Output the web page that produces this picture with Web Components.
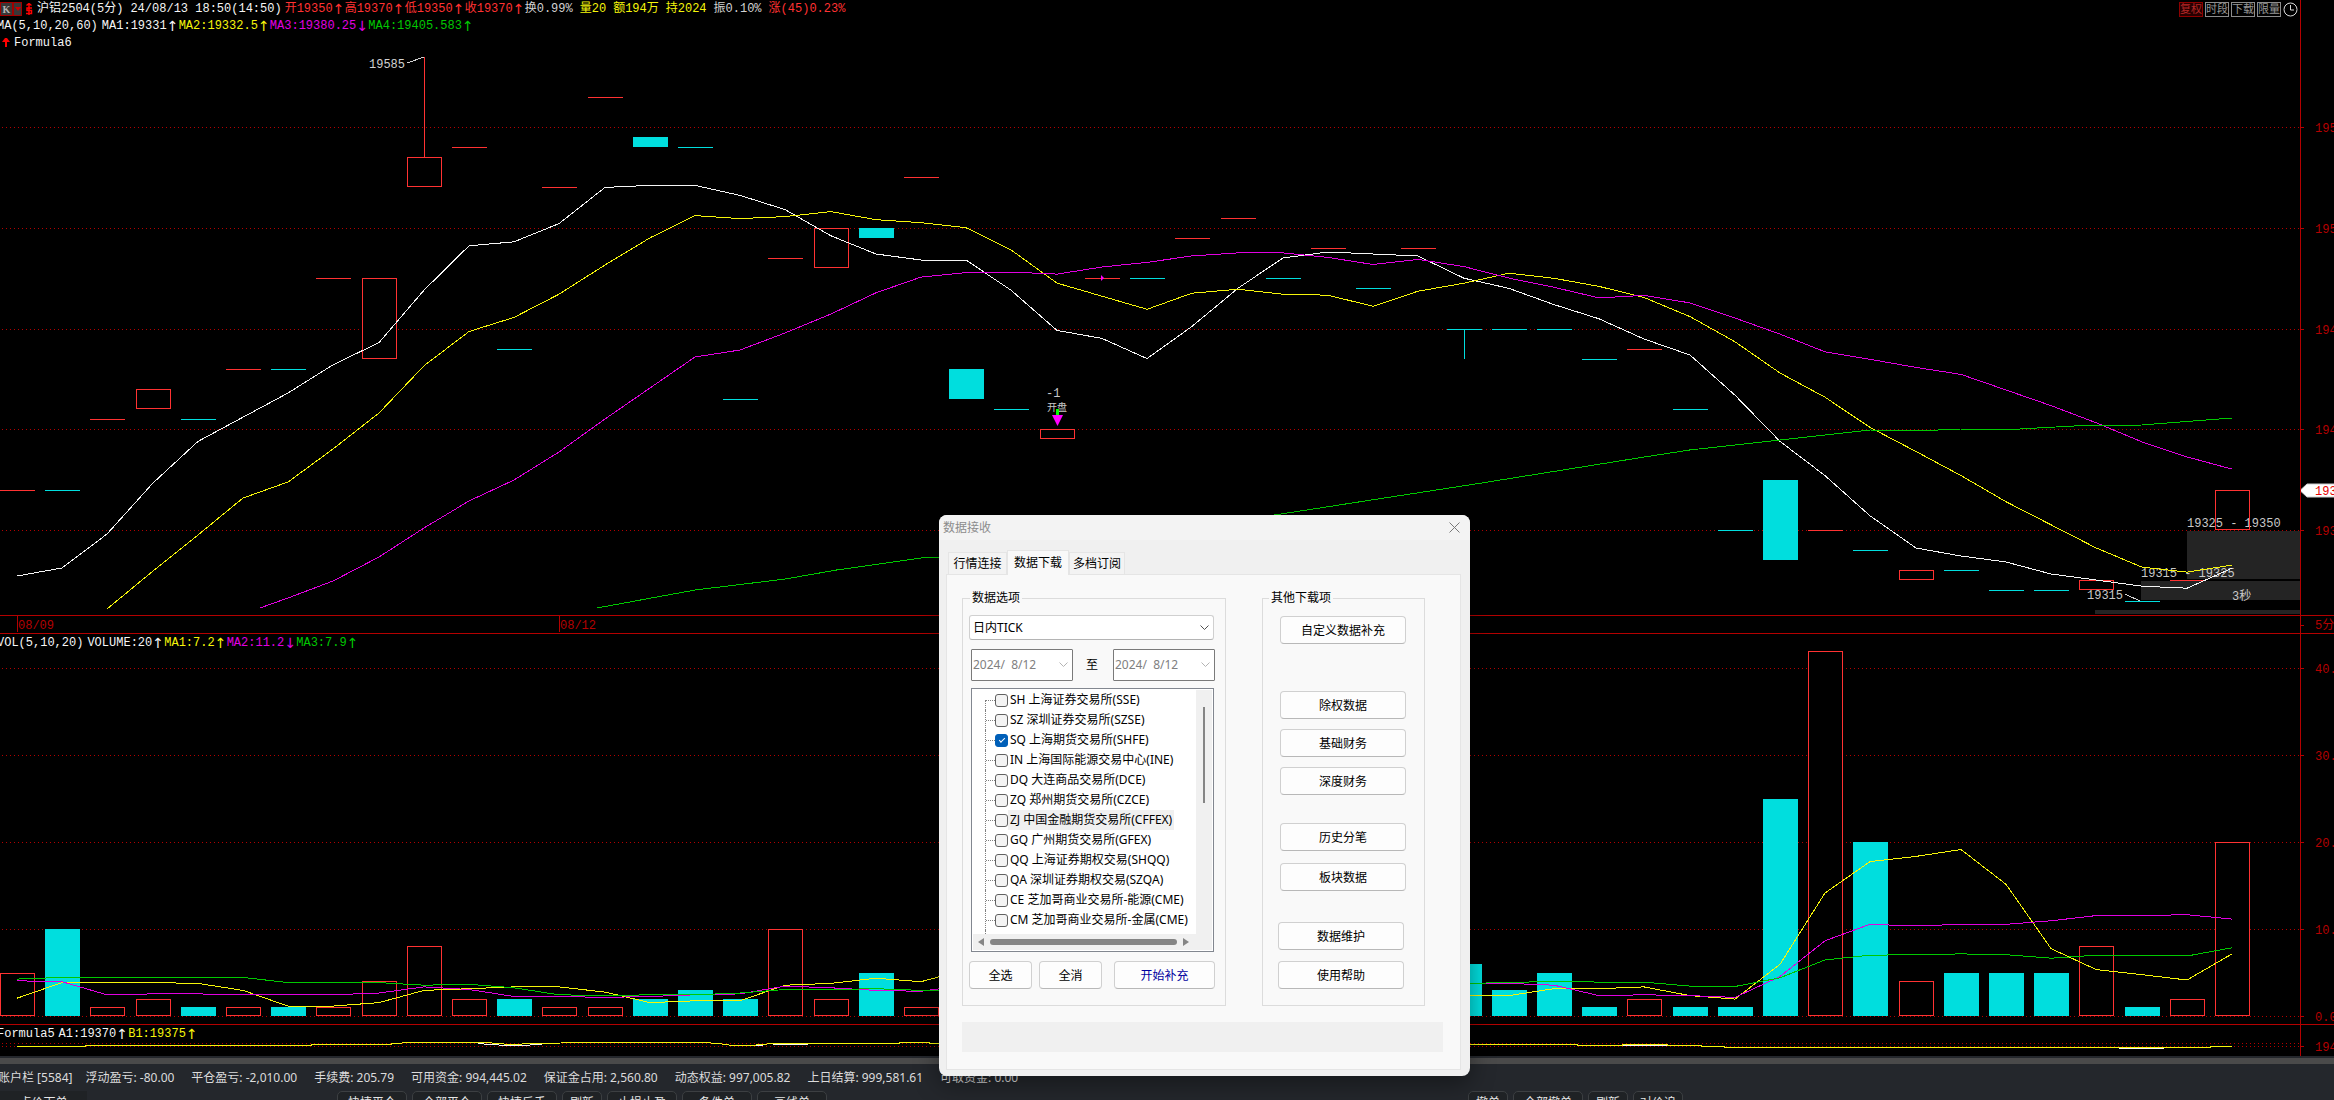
<!DOCTYPE html>
<html lang="zh-CN">
<head>
<meta charset="utf-8">
<title>沪铝2504</title>
<style>
html,body{margin:0;height:100%;background:#000;overflow:hidden}
</style>
</head>
<body>
<trade-app></trade-app>
<script>
const MONO = '"Liberation Mono","Noto Sans CJK SC",monospace';
const UI = '"Noto Sans","Noto Sans CJK SC",sans-serif';
const C = {red:'#ff3232',cyan:'#00dede',yellow:'#f5f50a',mag:'#e100e1',green:'#00c800',frame:'#b40000',white:'#f5f5f5'};

/* One entry per bar: [kind, body top, body bottom, wick end], measured down the price pane */
const bars = [
 ['r',490],['c',490],['r',419],['r',389,408],['c',419],['r',369],['c',369],['r',278],['r',278,358],['r',157,186,57],
 ['r',147],['c',349],['r',187],['r',97],['c',137,147],['c',147],['c',399],['r',258],['r',228,267],['c',228,238],
 ['r',177],['c',369,399],['c',409],['r',429,438],['r',278],['c',278],['r',238],['r',218],['c',278],['r',248],
 ['c',288],['r',248],['c',329,329,359],['c',329],['c',329],['c',359],['r',349],['c',409],['c',530],['c',480,560],
 ['r',530],['c',550],['r',570,579],['c',570],['c',590],['c',590],['r',580,589],['c',601],['r',580],['r',490,529]];
const vols = [5,10,1,2,1,1,1,1,4,8,2,2,1,1,2,3,2,10,2,5,1,9,3,3,7,13,1,2,3,1,1,1,6,3,5,1,2,1,1,25,42,20,4,5,5,5,8,1,2,20];
const close = bars.map(b => b[0] === 'c' && b[2] ? b[2] : b[1]);
const mean = (a, n) => a.map((_, i) => i < n - 1 ? null : a.slice(i - n + 1, i + 1).reduce((s, v) => s + v, 0) / n);
const seed = (m, from, vals) => { vals.forEach((v, k) => m[from + k] = v); return m; };
const N = bars.length;
const svgText = (x, y, t, fill, extra = '') => `<text x="${x}" y="${y}" fill="${fill}" ${extra}>${t}</text>`;

/* Base class: draws again whenever its box changes size */
class Drawn extends HTMLElement {
  constructor() {
    super();
    this.attachShadow({mode: 'open'}).innerHTML = `<style>
      :host{display:block;overflow:hidden;min-width:0;min-height:0;position:relative}
      svg{display:block;width:100%;height:100%;font:12px ${MONO};white-space:pre}
      polyline,line,rect{shape-rendering:crispEdges}
    </style><svg></svg>`;
    this.svg = this.shadowRoot.querySelector('svg');
  }
  connectedCallback() { this.redraw(); new ResizeObserver(() => this.redraw()).observe(this); }
  redraw() {
    this.w = this.clientWidth; this.h = this.clientHeight;
    if (this.w) this.svg.innerHTML = this.draw();
  }
  x(i) { return Math.round(17 + i * (this.w - 85) / (N - 1)); }
  get bw() { return Math.round((this.w - 85) / (N - 1) * .78); }
  line(vals, f, color) {
    let pts = '';
    vals.forEach((v, i) => { if (v != null) pts += `${this.x(i)},${f(v).toFixed(1)} `; });
    return `<polyline points="${pts}" fill="none" stroke="${color}"/>`;
  }
  grid(y) { return `<line x1="2" x2="${this.w}" y1="${y}" y2="${y}" stroke="#b40000" stroke-dasharray="1 3"/>`; }
}

class PricePlot extends Drawn {
  draw() {
    const k = this.h / 565, f = v => (v - 50) * k, w = this.w, b = this.bw;
    let s = '';
    for (const [x, y, hh] of [[113, 531, 48], [159, 581, 19], [205, 610, 4]])
      s += `<rect x="${w - x}" y="${f(y)}" width="${x}" height="${hh}" fill="#242424"/>`;
    for (const y of [127.5, 228.5, 329.5, 429.5, 530.5]) s += this.grid(f(y));
    s += svgText(this.x(49) - 45, f(527), '19325 - 19350', '#c8c8c8');
    s += svgText(this.x(48) - 46, f(577), '19315 - 19325', '#c8c8c8');
    s += svgText(this.x(47) - 55, f(599), '19315', '#c8c8c8');
    s += svgText(w - 68, f(600), '3秒', '#c8c8c8');
    s += svgText(this.x(9) - 55, f(68), '19585', '#d2d2d2');
    s += `<line x1="${this.x(9) - 17}" y1="${f(63)}" x2="${this.x(9)}" y2="${f(57)}" stroke="#d2d2d2"/>`;
    s += `<line x1="${this.x(47) - 17}" y1="${f(594)}" x2="${this.x(47)}" y2="${f(602)}" stroke="#d2d2d2"/>`;
    bars.forEach(([t, y1, y2, wick], i) => {
      const x = this.x(i), c = t === 'r' ? C.red : C.cyan;
      if (!y2 || y1 === y2) s += `<line x1="${x - b / 2}" x2="${x + b / 2}" y1="${f(y1) + .5}" y2="${f(y1) + .5}" stroke="${c}"/>`;
      else if (t === 'c') s += `<rect x="${x - b / 2}" y="${f(y1)}" width="${b}" height="${f(y2) - f(y1)}" fill="${c}"/>`;
      else s += `<rect x="${x - 17 + .5}" y="${f(y1) + .5}" width="${b - 1}" height="${f(y2) - f(y1)}" fill="${i === 49 ? 'none' : '#000'}" stroke="${c}"/>`;
      if (wick) s += `<line x1="${x + .5}" x2="${x + .5}" y1="${f(y1)}" y2="${f(wick)}" stroke="${c}"/>`;
    });
    s += `<path d="M${this.x(24) - 1} ${f(275)}v6l3-3z" fill="#ff00ff"/>`;
    s += this.line(seed(mean(close, 5), 0, [576, 568, 534, 483]), f, C.white);
    s += this.line(seed(mean(close, 10), 2, [609, 571, 535, 498, 482, 449, 413]), f, C.yellow);
    s += this.line(seed(mean(close, 20), 6, [598, 581, 557, 528, 501, 480, 452, 419, 388, 357, 350, 333, 314]), f, C.mag);
    s += `<polyline points="${this.x(5) + 17},${f(608)} ${this.x(6)},${f(598)}" stroke="${C.mag}"/>`;
    const g = [[12.83,608],[15,590],[17,579],[18.13,570],[20,558],[20.4,557],[27.4,518],[28.1,513],[32.4,483],[36,457],[37,450],[39,440],[41,430],[42,431],[43,429],[44.3,429],[45.5,426],[47,425],[49,418]];
    const gx = i => 17 + i * (w - 85) / (N - 1);
    s += `<polyline points="${g.map(([i, y]) => gx(i) + ',' + f(y)).join(' ')}" fill="none" stroke="${C.green}"/>`;
    const m = this.x(23);
    s += svgText(m - 11, f(397), '-1', '#c8c8c8') + svgText(m - 10, f(411), '开盘', '#c8c8c8', 'font-size="10"');
    s += `<rect x="${m - 1}" y="${f(409)}" width="3" height="7" fill="#00ff00"/><path d="M${m - 5} ${f(415)}h11l-5.5 11z" fill="#ff00ff"/>`;
    return s;
  }
}
class VolumePlot extends Drawn {
  draw() {
    const k = this.h / 374, f = v => (366.5 - v * 8.7) * k, b = this.bw;
    let s = [0, 10, 20, 30, 40].map(v => this.grid(Math.floor(f(v)) + .5)).join('');
    vols.forEach((v, i) => {
      const x = this.x(i), y = Math.floor(f(v));
      s += bars[i][0] === 'c'
        ? `<rect x="${x - b / 2}" y="${y}" width="${b}" height="${Math.floor(f(0)) - y}" fill="${C.cyan}"/>`
        : `<rect x="${x - 17 + .5}" y="${y + .5}" width="${b - 1}" height="${Math.floor(f(0)) - y - 1}" fill="#000" stroke="${C.red}"/>`;
    });
    s += this.line(seed(mean(vols, 5), 0, [2.1, 3.9, 3.9, 3.9]), f, C.yellow);
    s += this.line(seed(mean(vols, 10), 0, [4.1, 4, 2.5, 2.6, 2.6, 2.5, 2.5, 2.5, 2.7]), f, C.mag);
    s += this.line(seed(mean(vols, 20), 0, [4.3,4.5,4.5,4.5,4.5,4.5,3.9,3.9,3.9,3.6,3.7,3.3,2.5,2.4,2.5,2.5,2.7,3.1,3.1]), f, C.green);
    return s;
  }
}
class FormulaPlot extends Drawn {
  draw() {
    const r = this.w / 2300, st = (a, c) => `<polyline points="${a.map(([x, y]) => x * r + ',' + (y - 1041)).join(' ')}" fill="none" stroke="${c}"/>`;
    return this.grid(2.5) + this.grid(5.5)
      + st([[478,1043.5],[490,1044.5],[508,1045.5],[526,1045.5],[534,1044.5],[550,1043.5]], C.white)
      + st([[745,1045.5],[763,1045.5]], C.white) + st([[773,1044.5],[808,1044.5]], C.white)
      + st([[1622,1045.5],[1667,1045.5]], C.white) + st([[2119,1048.5],[2164,1048.5]], C.white)
      + st([[17,1046.5],[85,1046.5],[85,1045.5],[311,1045.5],[311,1044.5],[391,1044.5],[391,1043.5],[413,1042.5],[480,1042.5],[503,1043.5],[505,1044.5],[540,1043.5],[582,1042.5],[703,1042.5],[718,1043.5],[733,1045.5],[750,1045.5],[773,1043.5],[899,1043.5],[899,1042.5],[929,1042.5],[929,1043.5],[970,1044.5],[1577,1044.5],[1577,1045.5],[1622,1045.5],[1622,1044.5],[1667,1044.5],[1667,1045.5],[1701,1045.5],[1701,1046.5],[1724,1046.5],[1724,1047.5],[2210,1047.5],[2210,1046.5],[2232,1046.5]], C.yellow);
  }
}
class DatePlot extends Drawn {
  draw() {
    return [[0, '08/09'], [12, '08/12']].map(([i, t]) =>
      `<line x1="${this.x(i) + .5}" x2="${this.x(i) + .5}" y1="0" y2="16" stroke="${C.frame}"/>` + svgText(this.x(i) + 1, 13, t, C.frame)).join('');
  }
}
class AxisScale extends Drawn {
  draw() {
    const labels = JSON.parse(this.getAttribute('labels')), k = this.h / +this.getAttribute('base');
    const mark = this.getAttribute('mark');
    let s = labels.map(([y, t]) => `<line x1="0" x2="3" y1="${y * k}" y2="${y * k}" stroke="${C.frame}"/>` + svgText(14, y * k + 4, t, C.frame)).join('');
    if (mark) {
      const [y, t] = JSON.parse(mark);
      s += `<path d="M-1 ${y * k}L6 ${y * k - 6.5}H40V${y * k + 6.5}H6Z" fill="#fff" stroke="#ccc"/>` + svgText(14, y * k + 4, t, '#e60000');
    }
    return s;
  }
}

/* One pane: header row above a plot, with the price axis down the right side */
class ChartPane extends HTMLElement {
  constructor() {
    super();
    this.attachShadow({mode: 'open'}).innerHTML = `<style>
      :host{display:grid;grid-template-columns:minmax(0,1fr) 34px;grid-template-rows:auto minmax(0,1fr);background:#000;box-sizing:border-box;min-height:0}
      .axis{grid-column:2;grid-row:1/3;border-left:1px solid ${C.frame};min-height:0}
      .axis ::slotted(*){height:100%}
      .head{min-width:0;overflow:hidden}
      .plot{display:grid;min-height:0;min-width:0;grid-row:2}
    </style><div class="head"><slot name="head"></slot></div><div class="plot"><slot></slot></div><div class="axis"><slot name="axis"></slot></div>`;
  }
}

/* A line of indicator readings; trend arrows have a fixed cell */
class ReadingLine extends HTMLElement {
  constructor() {
    super();
    this.attachShadow({mode: 'open'}).innerHTML = `<style>
      :host{display:flex;align-items:center;height:16px;font:12px/16px ${MONO};white-space:pre;color:${C.white}}
      i{font:14px/16px "DejaVu Sans",sans-serif;display:inline-block;width:12px;height:16px;vertical-align:top;text-align:center}
      span{flex:none;height:16px}
      .r{color:${C.red}}.y{color:${C.yellow}}.m{color:${C.mag}}.g{color:${C.green}}.s{color:#d2d2d2}
      .gap{margin-left:7px}.near{margin-left:4px}.date{margin-right:3px}
    </style>` + this.getAttribute('items').split('|').map(t => {
      const [cls, txt] = t.split('~');
      return `<span class="${cls}">${txt.replace(/[↑↓]/g, '<i>$&</i>')}</span>`;
    }).join('');
  }
}

class ChartTools extends HTMLElement {
  constructor() {
    super();
    this.attachShadow({mode: 'open'}).innerHTML = `<style>
      :host{display:flex;gap:2px;align-items:center;margin-left:auto;padding-right:2px}
      button{all:unset;box-sizing:border-box;width:24px;height:15px;border:1px solid #8c8c8c;font:11px/12px ${UI};color:#969696;text-align:center}
      .on{border-color:#8c0000;color:#b42828;background:#280000}
      svg{width:15px;height:15px;display:block}
    </style><button class="on">复权</button><button>时段</button><button>下载</button><button>限量</button>
    <svg viewBox="0 0 15 15" fill="none" stroke="#dcdcdc"><circle cx="7.5" cy="7.5" r="6.5"/><path d="M7.5 3v5H11"/></svg>`;
  }
}
class SymbolIcons extends HTMLElement {
  constructor() {
    super();
    this.attachShadow({mode: 'open'}).innerHTML = `<style>
      :host{display:flex;flex:none;align-items:center;width:37px}
      button{all:unset;box-sizing:border-box;height:14px;border:1px solid #a00000;background:#373737;color:#b4b4b4;font:bold 10px/11px "Liberation Serif",serif;text-align:center;width:13px}
      .d{width:9px;display:grid;place-items:center}
      svg{display:block}
      .u{margin-left:3px}
    </style><button>K</button><button class="d" aria-label="周期"><svg width="6" height="4"><path d="M0 0h6L3 4z" fill="#c80000"/></svg></button>
    <svg class="u" width="8" height="13" viewBox="0 0 8 13" fill="none" stroke="#f00" stroke-width="1.5"><path d="M1.500 2.500L4 .5L6.500 2.500M7 5H2v2.500h4.500V10.500H1M4 1v11"/></svg>`;
  }
}
class UpFlag extends HTMLElement {
  constructor() {
    super();
    this.attachShadow({mode: 'open'}).innerHTML = `<style>:host{display:block;flex:none;width:14px}svg{display:block;margin-left:2px}</style>
    <svg width="8" height="9"><path d="M0 4l3-4h2l3 4H5v5H3V4z" fill="#f00"/></svg>`;
  }
}

class AccountBar extends HTMLElement {
  constructor() {
    super();
    const it = ['账户栏 [5584]','浮动盈亏: -80.00','平仓盈亏: -2,010.00','手续费: 205.79','可用资金: 994,445.02','保证金占用: 2,560.80','动态权益: 997,005.82','上日结算: 999,581.61','可取资金: 0.00'];
    this.attachShadow({mode: 'open'}).innerHTML = `<style>
      :host{display:flex;gap:17px;height:27px;align-items:center;font:12px/20px ${UI};color:#dcdcdc;white-space:pre;background:#24272c;border-top:6px solid #4a4a4a}
      span:first-of-type{margin:0 -4px 0 -2px}
    </style>` + it.map(t => `<span>${t}</span>`).join('');
  }
}
class OrderBar extends HTMLElement {
  constructor() {
    super();
    this.attachShadow({mode: 'open'}).innerHTML = `<style>
      :host{display:flex;gap:5px;height:9px;overflow:hidden;background:#24272c;align-items:flex-start;font:12px/20px ${UI}}
      button{all:unset;flex:none;box-sizing:border-box;width:70px;height:24px;border:1px solid #3c3f42;border-radius:5px;background:#1f2225;color:#e6e6e6;text-align:center}
      .n{width:40px}.m{width:50px}
      .tab{width:87px;border:0;border-radius:0;margin-right:245px;background:#1f2225}
      .sp{margin-left:636px}
    </style><button class="tab">点价下单</button><button>快捷平仓</button><button>全部平仓</button><button>快捷反手</button><button class="n">刷新</button><button>止损止盈</button><button>条件单</button><button>画线单</button>
    <button class="n sp">撤单</button><button>全部撤单</button><button class="n">刷新</button><button class="m">对价追</button>`;
  }
}

/* ---- dialog parts ---- */
class PushButton extends HTMLElement {
  constructor() {
    super();
    this.attachShadow({mode: 'open'}).innerHTML = `<style>
      :host{display:block;height:28px}
      button{all:unset;box-sizing:border-box;width:100%;height:100%;border:1px solid #d0d0d0;border-bottom-color:#b8b8b8;border-radius:4px;background:#fdfdfd;text-align:center;line-height:25px}
    </style><button><slot></slot></button>`;
  }
}
class DateBox extends HTMLElement {
  constructor() {
    super();
    this.attachShadow({mode: 'open'}).innerHTML = `<style>
      :host{display:flex;box-sizing:border-box;width:102px;height:32px;border:1px solid #7a7a7a;background:#fff;align-items:center;border-radius:1px}
      input{all:unset;flex:1;min-width:0;padding-left:1px;color:#808080;white-space:pre;font:12px/16px ${UI}}
      svg{margin-right:4px}
    </style><input aria-label="${this.getAttribute('label')}" value="2024/  8/12" readonly><svg width="9" height="6" fill="none" stroke="#b4b4b4"><path d="M.5 .5l4 4 4-4"/></svg>`;
  }
}
class ComboBox extends HTMLElement {
  constructor() {
    super();
    this.attachShadow({mode: 'open'}).innerHTML = `<style>
      :host{display:grid;width:245px;height:25px;align-items:center}
      select{grid-area:1/1;appearance:none;box-sizing:border-box;width:100%;height:100%;border:1px solid #d0d0d0;border-bottom-color:#b4b4b4;border-radius:3px;background:#fff;padding:0 3px;font:12px/16px ${UI};color:#000}
      svg{grid-area:1/1;justify-self:end;margin-right:5px;pointer-events:none}
    </style><select aria-label="数据类型"><option>日内TICK</option></select><svg width="9" height="6" fill="none" stroke="#505050"><path d="M.5 .5l4 4 4-4"/></svg>`;
  }
}
class ExchangeTree extends HTMLElement {
  constructor() {
    super();
    const rows = ['SH 上海证券交易所(SSE)','SZ 深圳证券交易所(SZSE)','SQ 上海期货交易所(SHFE)','IN 上海国际能源交易中心(INE)','DQ 大连商品交易所(DCE)','ZQ 郑州期货交易所(CZCE)','ZJ 中国金融期货交易所(CFFEX)','GQ 广州期货交易所(GFEX)','QQ 上海证券期权交易(SHQQ)','QA 深圳证券期权交易(SZQA)','CE 芝加哥商业交易所-能源(CME)','CM 芝加哥商业交易所-金属(CME)'];
    this.attachShadow({mode: 'open'}).innerHTML = `<style>
      :host{display:grid;grid-template-columns:minmax(0,1fr) 16px;grid-template-rows:1fr 16px;box-sizing:border-box;border:1px solid #828790;background:#fff;padding:1px}
      ul{list-style:none;margin:0;padding:0 0 0 12px;overflow:hidden}
      li{display:flex;align-items:center;height:20px;white-space:pre}
      li::before{content:"";order:-2;height:20px;border-left:1px dotted #808080}
      li:first-child::before{height:10px;align-self:flex-end}
      li::after{content:"";order:-1;width:9px;border-top:1px dotted #808080}
      ul::after{content:"";display:block;height:4px;border-left:1px dotted #808080}
      input{appearance:none;margin:0;box-sizing:border-box;flex:none;width:13px;height:13px;border:1px solid #606060;border-radius:3px;background:#f3f3f3;display:grid;place-items:center}
      input:checked{background:#005fb8;border-color:#005fb8}
      input:checked::after{content:"";width:5px;height:2px;border:solid #fff;border-width:0 0 1px 1px;transform:translateY(-1px) rotate(-45deg)}
      label{line-height:20px;padding:0 2px}
      .cur{background:#f0f0f0}
      .v{background:#f0f0f0;display:flex;justify-content:center}
      .v::before{content:"";width:2px;height:96px;margin-top:17px;background:#858585}
      .h{grid-column:1/3;background:#f0f0f0;display:flex;align-items:center;gap:6px;padding-left:5px}
      .h b{width:187px;height:6px;border-radius:3px;background:#858585}
    </style><ul>${rows.map((t, i) => `<li><input type="checkbox" id="e${i}" ${i === 2 ? 'checked' : ''}><label for="e${i}" class="${i === 6 ? 'cur' : ''}">${t}</label></li>`).join('')}</ul>
    <div class="v"></div><div class="h"><svg width="6" height="8"><path d="M6 0v8L0 4z" fill="#858585"/></svg><b></b><svg width="6" height="8"><path d="M0 0v8l6-4z" fill="#858585"/></svg></div>`;
  }
}
class DataDialog extends HTMLElement {
  constructor() {
    super();
    this.attachShadow({mode: 'open'}).innerHTML = `<style>
      :host{display:flex;flex-direction:column;width:531px;background:#f0f0f0;border-radius:8px;overflow:hidden;font:12px/16px ${UI};color:#000;box-shadow:0 8px 24px rgba(0,0,0,.4)}
      header{display:flex;justify-content:space-between;align-items:center;height:25px;background:#f3f3f3;color:#8c8c8c;padding:0 10px 0 4px}
      header button{all:unset;display:block}
      header svg{display:block}
      nav{display:flex;align-items:flex-end;height:34px;padding-left:9px}
      nav button{all:unset;box-sizing:border-box;height:22px;line-height:19px;text-align:center;border:1px solid #e5e5e5;border-bottom:0;background:#f3f3f3;width:59px}
      nav .on{background:#f9f9f9;height:25px;line-height:20px;width:62px;margin-bottom:-1px;z-index:1}
      nav .last{width:56px}
      main{margin:0 9px 6px 7px;border:1px solid #e5e5e5;background:#f9f9f9;padding:15px 17px 17px 15px}
      .row{display:flex;gap:36px}
      fieldset{margin:0;border:1px solid #dcdcdc;box-sizing:border-box;height:416px;min-width:0;display:flex;flex-direction:column}
      legend{padding:0 2px;height:16px}
      .a{width:264px;padding:9px 9px 0 6px}.a legend{margin-left:1px}
      .b{width:163px;padding:10px 0 0 17px}.b legend{margin-left:-11px}
      .dates{display:flex;align-items:center;margin:9px 0 7px 2px;width:244px}
      .dates span{width:40px;padding-right:2px;box-sizing:border-box;text-align:center}
      exchange-tree{width:243px;height:264px;margin-left:2px}
      .acts{display:flex;margin-top:9px}
      .acts push-button{width:63px;margin-right:7px}
      .acts .go{width:101px;margin:0 0 0 5px;color:#0000a0}
      .b push-button{width:126px;margin-bottom:10px}
      .b .g1{margin-bottom:47px}.b .g2{margin-bottom:28px}.b .g3{margin-bottom:12px}.b .g4{margin-bottom:31px}
      .b .help{width:126px;margin-left:-2px;margin-bottom:11px}
      .bar{height:30px;background:#f0f0f0;margin-top:16px}
    </style>
    <header><span>数据接收</span><button aria-label="关闭"><svg width="11" height="11" stroke="#787878"><path d="M.5 .5l10 10M10.5 .5l-10 10"/></svg></button></header>
    <nav><button>行情连接</button><button class="on">数据下载</button><button class="last">多档订阅</button></nav>
    <main><div class="row">
      <fieldset class="a"><legend>数据选项</legend><combo-box></combo-box>
        <div class="dates"><date-box label="开始日期"></date-box><span>至</span><date-box label="结束日期"></date-box></div>
        <exchange-tree></exchange-tree>
        <div class="acts"><push-button>全选</push-button><push-button>全消</push-button><push-button class="go">开始补充</push-button></div>
      </fieldset>
      <fieldset class="b"><legend>其他下载项</legend>
        <push-button class="g1">自定义数据补充</push-button><push-button>除权数据</push-button><push-button>基础财务</push-button><push-button class="g2">深度财务</push-button>
        <push-button class="g3">历史分笔</push-button><push-button class="g4">板块数据</push-button><push-button class="help">数据维护</push-button><push-button class="help">使用帮助</push-button>
      </fieldset></div><div class="bar"></div></main>`;
  }
}

class TradeApp extends HTMLElement {
  constructor() {
    super();
    this.attachShadow({mode: 'open'}).innerHTML = `<style>
      :host{display:flex;flex-direction:column;height:100vh;position:relative;overflow:hidden;background:#000}
      .price{flex:615 1 0}.vol{flex:390 1 0;border-top:1px solid ${C.frame}}
      .dates{flex:0 0 18px;border-top:1px solid ${C.frame}}
      .fx{flex:0 0 32px;border-top:1px solid ${C.frame}}
      .top{height:50px;padding-top:1px;box-sizing:border-box}
      .line{display:flex;align-items:center;height:16px}
      .top .line + .line{height:17px}
      .cut{margin-left:-3px}
      .vh{height:16px;padding-top:2px;box-sizing:border-box;display:flex;align-items:center}
      .split{flex:0 0 2px;background:#24272c}
      data-dialog{position:absolute;left:939px;top:515px}
    </style>
    <chart-pane class="price">
      <div slot="head" class="top">
        <div class="line"><symbol-icons></symbol-icons><reading-line items="w~沪铝2504(5分)|gap date~24/08/13 18:50(14:50)|r~开19350↑|r~高19370↑|r~低19350↑|r~收19370↑|s~换0.99%|y gap~量20|y gap~额194万|y gap~持2024|s gap~振0.10%|r gap~涨(45)0.23%"></reading-line><chart-tools></chart-tools></div>
        <div class="line cut"><reading-line items="w~MA(5,10,20,60)|near~MA1:19331↑|y~MA2:19332.5↑|m~MA3:19380.25↓|g~MA4:19405.583↑"></reading-line></div>
        <div class="line"><up-flag></up-flag><reading-line items="w~Formula6"></reading-line></div>
      </div>
      <price-plot></price-plot>
      <axis-scale slot="axis" base="615" labels='[[127.5,"19550"],[228.5,"19500"],[329.5,"19450"],[429.5,"19400"],[530.5,"19350"]]' mark='[490.5,"19370"]'></axis-scale>
    </chart-pane>
    <chart-pane class="dates"><date-plot></date-plot><axis-scale slot="axis" base="17" labels='[[9,"5分钟"]]'></axis-scale></chart-pane>
    <chart-pane class="vol">
      <div slot="head" class="vh cut"><reading-line items="w~VOL(5,10,20)|near~VOLUME:20↑|y~MA1:7.2↑|m~MA2:11.2↓|g~MA3:7.9↑"></reading-line></div>
      <volume-plot></volume-plot>
      <axis-scale slot="axis" base="390" labels='[[34.5,"40.0"],[121.5,"30.0"],[208.5,"20.0"],[295.5,"10.0"],[382.5," 0.0"]]'></axis-scale>
    </chart-pane>
    <chart-pane class="fx">
      <div slot="head" class="vh cut"><reading-line items="w~Formula5|near~A1:19370↑|y~B1:19375↑"></reading-line></div>
      <formula-plot></formula-plot>
      <axis-scale slot="axis" base="31" labels='[[21.5,"19400"]]'></axis-scale>
    </chart-pane>
    <div class="split"></div>
    <account-bar></account-bar><order-bar></order-bar>
    <data-dialog></data-dialog>`;
  }
}
for (const [n, c] of Object.entries({
  'price-plot': PricePlot, 'volume-plot': VolumePlot, 'formula-plot': FormulaPlot, 'date-plot': DatePlot, 'axis-scale': AxisScale,
  'chart-pane': ChartPane, 'chart-tools': ChartTools, 'symbol-icons': SymbolIcons, 'up-flag': UpFlag,
  'account-bar': AccountBar, 'order-bar': OrderBar, 'push-button': PushButton, 'combo-box': ComboBox,
  'exchange-tree': ExchangeTree, 'data-dialog': DataDialog, 'reading-line': ReadingLine, 'date-box': DateBox,
  'trade-app': TradeApp})) customElements.define(n, c);
</script>
</body>
</html>
